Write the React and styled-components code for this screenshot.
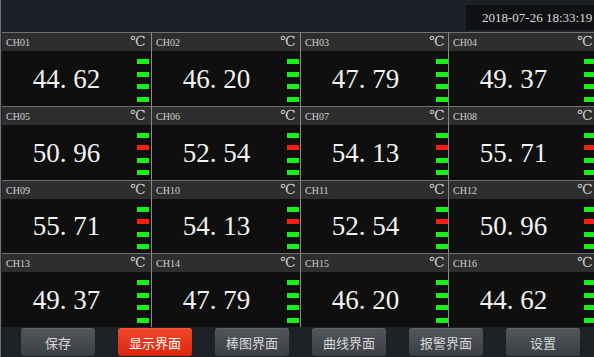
import React from 'react'
import styled, { createGlobalStyle } from 'styled-components'

const Global = createGlobalStyle`
html, body { margin: 0; padding: 0; background: #1d2026; }
body { font-family: "Liberation Serif", "Noto Sans CJK SC", serif; }
`;

const Screen = styled.div`width: 593px; height: 357px; overflow: hidden;
border-left: 1px solid #6e7075; background: #1d2026;
display: flex; flex-direction: column; padding-left: 0;`;

const TopBar = styled.div`height: 32px; display: flex; justify-content: flex-end;
align-items: flex-start; padding-left: 1px;`;

const Clock = styled.div`margin-top: 5px; width: 112px; height: 25px;
padding-left: 16px; background: #101113; color: #dcdcdc;
font-family: "Liberation Serif", serif; font-size: 13px; line-height: 25px;
white-space: nowrap; overflow: hidden;`;

const Grid = styled.div`height: 295px; margin-left: 1px; display: grid;
grid-template-columns: 149px 149px 148px 1fr; grid-template-rows: repeat(4, 1fr);`;

const Cell = styled.div`display: flex; flex-direction: column; min-width: 0;
border-top: 1px solid #707070;
border-left: ${p => (p.$first ? 'none' : '1px solid #8a8a8a')};`;

const Head = styled.div`height: 18px; background: #2e2e2e; display: grid;
grid-template-columns: 128px auto; align-items: center; color: #d0d0d0;`;

const Name = styled.span`font-family: "Liberation Serif", serif; font-size: 10px;
padding-left: 4px; padding-top: 1px;`;

const Unit = styled.span`font-family: "Liberation Serif", "DejaVu Serif", "Noto Sans CJK SC", serif;
font-size: 14px; line-height: 18px;`;

const Body = styled.div`flex: 1; background: #0f0f0f; display: grid;
grid-template-columns: 135px 12px;`;

const Value = styled.div`display: flex; align-items: center; justify-content: center;
color: #f2f2f2; font-family: "Liberation Serif", serif; font-size: 27px;
padding-right: 6px; padding-top: 2px;`;

const Dot = styled.span`display: inline-block; width: 0.5em;`;

const Bars = styled.div`display: flex; flex-direction: column; gap: 7.5px; padding-top: 8px;`;

const Bar = styled.div`height: 5px; background: ${p => (p.$alarm ? '#ff1c14' : '#19f019')};`;

const BottomBar = styled.div`flex: 1; display: flex; align-items: center; gap: 23px;
padding-left: 20px; background: #1e2126;`;

const Button = styled.div`width: 74px; height: 28px; border-radius: 3px;
display: flex; align-items: center; justify-content: center;
font-family: "Noto Sans CJK SC", sans-serif; font-size: 13px;
color: ${p => (p.$active ? '#ffffff' : '#d8d8d8')};
background: ${p => (p.$active
    ? 'linear-gradient(#f2472a, #d8260c)'
    : 'linear-gradient(#53575b, #3b3e42)')};
box-shadow: inset 0 1px 0 rgba(255,255,255,0.08);`;

const values = ['44.62', '46.20', '47.79', '49.37', '50.96', '52.54', '54.13', '55.71',
    '55.71', '54.13', '52.54', '50.96', '49.37', '47.79', '46.20', '44.62'];

const buttons = ['保存', '显示界面', '棒图界面', '曲线界面', '报警界面', '设置'];

function Reading({ value }) {
    const [a, b] = value.split('.')
    return <Value>{a}<Dot>.</Dot>{b}</Value>
}

export default function App() {
    return (
        <Screen>
            <Global />
            <TopBar><Clock>2018-07-26 18:33:19</Clock></TopBar>
            <Grid>
                {values.map((v, i) => {
                    const alarm = Number(v) > 50
                    return (
                        <Cell key={i} $first={i % 4 === 0}>
                            <Head>
                                <Name>CH{String(i + 1).padStart(2, '0')}</Name>
                                <Unit>℃</Unit>
                            </Head>
                            <Body>
                                <Reading value={v} />
                                <Bars>
                                    {[0, 1, 2, 3].map(k => <Bar key={k} $alarm={alarm && k === 1} />)}
                                </Bars>
                            </Body>
                        </Cell>
                    )
                })}
            </Grid>
            <BottomBar>
                {buttons.map(b => <Button key={b} $active={b === '显示界面'}>{b}</Button>)}
            </BottomBar>
        </Screen>
    )
}
